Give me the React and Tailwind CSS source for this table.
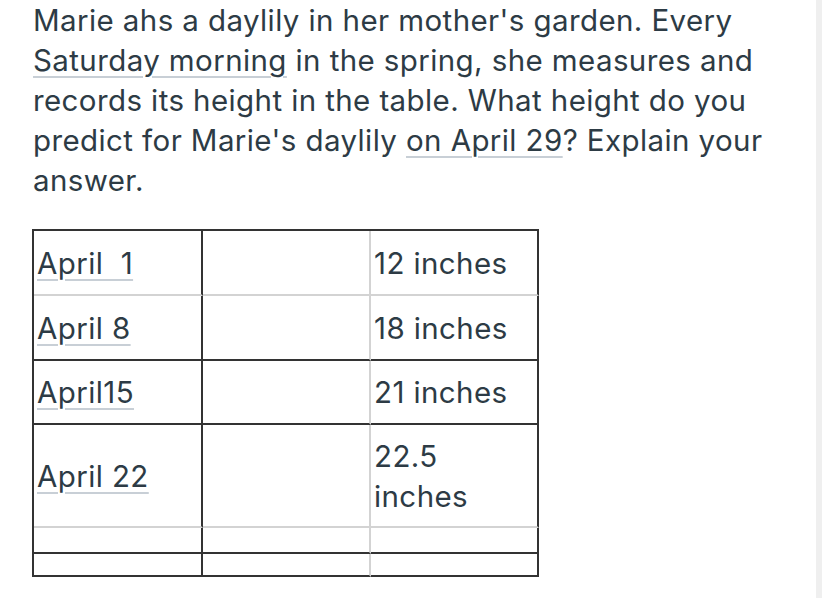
const DARK = "border-[#333333]";
const LIGHT = "border-[#d3d3d3]";

const rows = [
  { h: "h-[65px]", line: LIGHT, date: "April  1", height: "12 inches" },
  { h: "h-[65px]", line: DARK, date: "April 8", height: "18 inches" },
  { h: "h-[64px]", line: DARK, date: "April15", height: "21 inches" },
  { h: "h-[103px]", line: LIGHT, date: "April 22", height: ["22.5", "inches"] },
  { h: "h-[26px]", line: DARK },
  { h: "h-[23px]", line: DARK },
];

const colWidths = ["w-[169px]", "w-[168px]", "w-[168px]"];

function Link({ children }) {
  return (
    <span className="underline decoration-[#c8cfd6] decoration-2 underline-offset-[5px] whitespace-pre">
      {children}
    </span>
  );
}

export default function App() {
  return (
    <div className="flex h-[598px] w-[828px] bg-white text-[#2d3b45] font-['Inter','Noto_Sans',sans-serif] overflow-hidden">
      <div className="flex-1 pl-[33px]">
        <p className="text-[29.5px] leading-[40px] tracking-[0.4px]">
          Marie ahs a daylily in her mother's garden. Every
          <br />
          <Link>Saturday morning</Link> in the spring, she measures and
          <br />
          records its height in the table. What height do you
          <br />
          predict for Marie's daylily <Link>on April 29</Link>? Explain your
          <br />
          answer.
        </p>

        <div className={`mt-[29px] -ml-[1px] w-[507px] border-t-2 border-l-2 ${DARK}`}>
          {rows.map((r, i) => (
            <div key={i} className="flex">
              {[0, 1, 2].map((c) => (
                <div
                  key={c}
                  className={`${colWidths[c]} ${r.h} border-b-2 border-r-2 ${r.line} flex items-center px-[3px] text-[29.5px] leading-[40px] tracking-[0.4px]`}
                  style={{ borderRightColor: c === 1 ? "#d3d3d3" : "#333333" }}
                >
                  {c === 0 && r.date && <Link>{r.date}</Link>}
                  {c === 2 && r.height && (
                    Array.isArray(r.height) ? (
                      <span>
                        {r.height[0]}
                        <br />
                        {r.height[1]}
                      </span>
                    ) : (
                      <span>{r.height}</span>
                    )
                  )}
                </div>
              ))}
            </div>
          ))}
        </div>
      </div>
      <div className="w-[6px] h-full bg-[#efefef]" />
      <div className="w-[6px] h-full" />
    </div>
  );
}
